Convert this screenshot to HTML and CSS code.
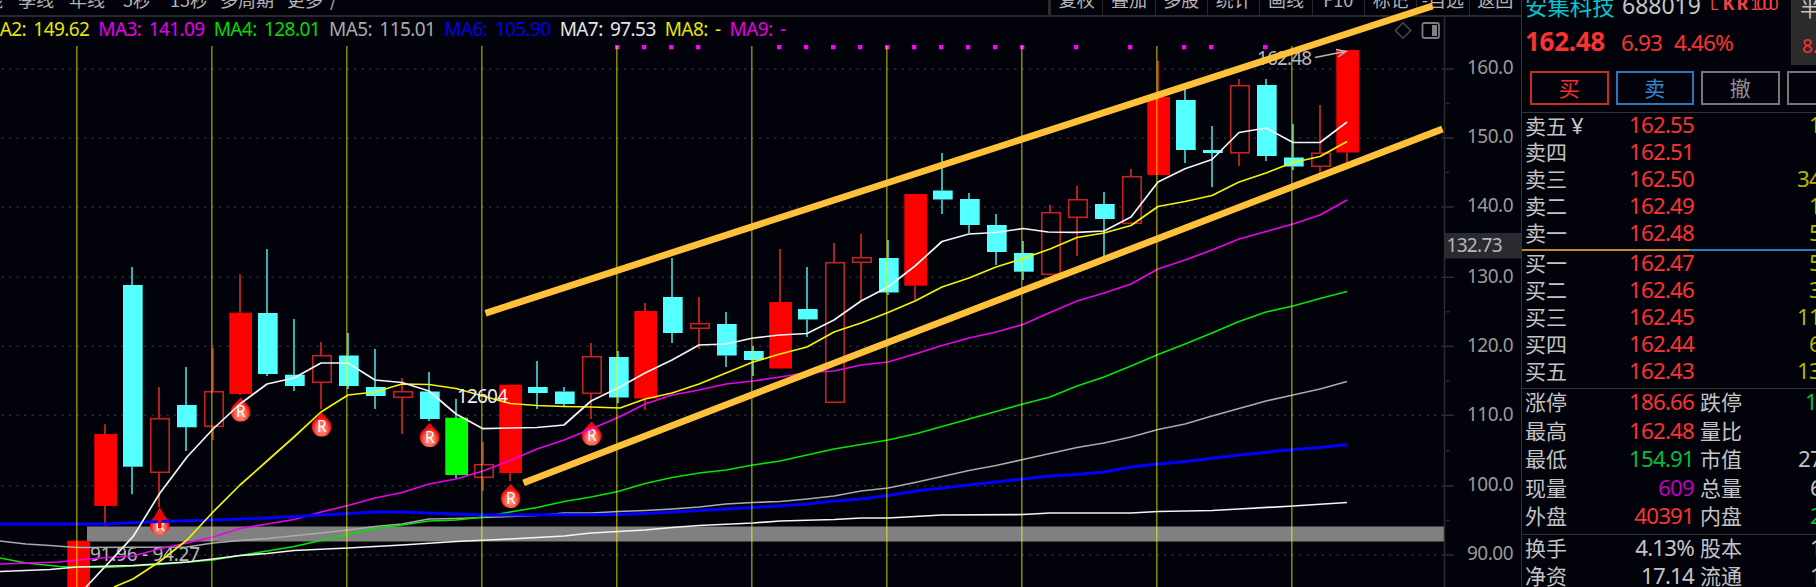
FILE: index.html
```html
<!DOCTYPE html>
<html lang="zh-CN">
<head>
    <meta charset="UTF-8">
    <meta name="viewport" content="width=device-width, initial-scale=1.0">
    <title>安集科技 688019</title>
    <link rel="stylesheet" href="styles.css">
</head>
<body>
    <div class="terminal">
        <main class="main">
            <nav class="toolbar">
                <div class="periods">
                    <span class="cut">月线</span>
                    <span>季线</span>
                    <span>年线</span>
                    <span class="sec">5秒</span>
                    <span class="sec wide">15秒</span>
                    <span class="multi">多周期</span>
                    <span class="more">更多</span>
                    <span class="slash">/</span>
                </div>
                <div class="tools">
                    <span>复权</span>
                    <span>叠加</span>
                    <span>多股</span>
                    <span>统计</span>
                    <span>画线</span>
                    <span>F10</span>
                    <span>标记</span>
                    <span>-自选</span>
                    <span>返回</span>
                </div>
            </nav>
            <div class="legend">
                <span class="yellow">MA2: 149.62</span>
                <span class="magenta">MA3: 141.09</span>
                <span class="green">MA4: 128.01</span>
                <span class="gray">MA5: 115.01</span>
                <span class="blue">MA6: 105.90</span>
                <span class="white">MA7: 97.53</span>
                <span class="yellow">MA8: -</span>
                <span class="magenta">MA9: -</span>
            </div>
            <svg class="chart" viewBox="0 42 1521 545" width="1521" height="545">
                <defs>
                    <radialGradient id="drop" cx="0.5" cy="0.7" r="0.5">
                        <stop offset="0" stop-color="#ffa090"/>
                        <stop offset="0.6" stop-color="#f8604c"/>
                        <stop offset="1" stop-color="#ee0808"/>
                    </radialGradient>
                </defs>
                <g id="grid"></g>
                <rect class="band" x="87" y="526.5" width="1357" height="15"/>
                <g id="candles"></g>
                <g id="marks"></g>
                <text class="note" x="90" y="561" textLength="110">91.96 - 94.27</text>
                <g id="averages"></g>
                <g id="sessions"></g>
                <path class="cue" d="M159.7 507L167 520H161.5V528H158V520H152.5Z"/>
                <text class="note light" x="457" y="402.5" textLength="51">12604</text>
                <text class="note" x="1257" y="65" textLength="55">162.48</text>
                <path class="pointer" d="M1315 57.5L1345 51.5M1336 49.5L1346 51.3L1338 57"/>
                <path class="icon" d="M1403 22.7L1410.7 30.5L1403 38.3L1395.3 30.5Z"/>
                <rect class="icon panel-icon" x="1422.5" y="23" width="16.5" height="15" rx="2"/>
                <rect class="icon-fill" x="1432" y="25" width="5" height="11"/>
                <line class="axis" x1="1444.5" y1="17" x2="1444.5" y2="587"/>
                <g id="scale"></g>
                <rect class="current" x="1445" y="233" width="76" height="25.5"/>
                <text class="note" x="1446.5" y="251.5" textLength="56">132.73</text>
                <line class="channel" x1="485.5" y1="313.2" x2="1432.5" y2="6"/>
                <line class="channel" x1="523.5" y1="482.8" x2="1442.5" y2="129"/>
            </svg>
        </main>

        <aside class="quote">
            <header class="stock">
                <div class="info">
                    <div class="title">
                        <span class="name">安集科技</span>
                        <span class="code">688019</span>
                        <span class="tags">L <b>K</b><b>R</b><i>1000</i></span>
                    </div>
                    <div class="price">
                        <strong>162.48</strong>
                        <span>6.93</span>
                        <span>4.46%</span>
                    </div>
                </div>
                <div class="sector">
                    <span>半</span>
                    <span class="red">8.</span>
                </div>
            </header>
            <div class="actions">
                <span class="buy">买</span>
                <span class="sell">卖</span>
                <span>撤</span>
                <span></span>
            </div>
            <section class="book asks">
                <div class="row"><span>卖五<small>¥</small></span><span class="num red">162.55</span><span class="vol one">1</span></div>
                <div class="row"><span>卖四</span><span class="num red">162.51</span><span></span></div>
                <div class="row"><span>卖三</span><span class="num red">162.50</span><span class="vol">34</span></div>
                <div class="row"><span>卖二</span><span class="num red">162.49</span><span class="vol one">1</span></div>
                <div class="row"><span>卖一</span><span class="num red">162.48</span><span class="vol one">5</span></div>
            </section>
            <div class="ratio"></div>
            <section class="book bids">
                <div class="row"><span>买一</span><span class="num red">162.47</span><span class="vol one">5</span></div>
                <div class="row"><span>买二</span><span class="num red">162.46</span><span class="vol one">3</span></div>
                <div class="row"><span>买三</span><span class="num red">162.45</span><span class="vol">11</span></div>
                <div class="row"><span>买四</span><span class="num red">162.44</span><span class="vol one">6</span></div>
                <div class="row"><span>买五</span><span class="num red">162.43</span><span class="vol">13</span></div>
            </section>
            <section class="stats">
                <div class="row"><span>涨停</span><span class="num red">186.66</span><span>跌停</span><span class="val down mid">1</span></div>
                <div class="row"><span>最高</span><span class="num red">162.48</span><span>量比</span><span></span></div>
                <div class="row"><span>最低</span><span class="num down">154.91</span><span>市值</span><span class="val">27</span></div>
                <div class="row"><span>现量</span><span class="num purple">609</span><span>总量</span><span class="val one">6</span></div>
                <div class="row"><span>外盘</span><span class="num red">40391</span><span>内盘</span><span class="val down one">2</span></div>
            </section>
            <section class="stats extra">
                <div class="row"><span>换手</span><span class="num">4.13%</span><span>股本</span><span class="val one">1</span></div>
                <div class="row"><span>净资</span><span class="num">17.14</span><span>流通</span><span class="val one">1</span></div>
            </section>
        </aside>
    </div>
    <script src="chart.js"></script>
</body>
</html>
```
FILE: styles.css
```css
* {
    box-sizing: border-box;
}

body {
    margin: 0;
    background: #02020a;
    color: #c4c4c4;
    font-family: "Noto Sans", "Noto Sans CJK SC", sans-serif;
    overflow: hidden;
}

.terminal {
    display: grid;
    grid-template-columns: 1521px 295px;
    height: 587px;
    overflow: hidden;
}

.main {
    display: flex;
    flex-direction: column;
    min-width: 0;
}

/* toolbar */
.toolbar {
    display: flex;
    justify-content: space-between;
    flex: none;
    height: 17px;
    overflow: hidden;
    border-bottom: 2px solid #29292d;
    font-family: "Noto Sans CJK SC", sans-serif;
    font-size: 18px;
    line-height: 26px;
    color: #b4b4b4;
}

.periods,
.tools {
    display: flex;
    height: 29px;
    margin-top: -14px;
    white-space: nowrap;
}

.periods {
    gap: 15px;
    margin-left: -33px;
}

.periods .sec {
    margin-left: 3px;
}

.periods .wide {
    margin-left: 4px;
}

.periods .multi {
    margin-left: -3px;
}

.periods .more {
    margin-left: -2px;
}

.periods .slash {
    margin-left: -8px;
}

.tools {
    width: 473px;
    border-left: 3px solid #2c2c30;
}

.tools span {
    flex: 1;
    text-align: center;
    border-right: 1px solid #29292d;
}

.tools span:last-child {
    border-right: 0;
}

/* moving average values */
.legend {
    display: flex;
    gap: 9px;
    flex: none;
    height: 25px;
    margin-left: -17px;
    font-size: 19px;
    line-height: 24px;
    letter-spacing: -0.58px;
    word-spacing: 3px;
    white-space: nowrap;
}

.legend .yellow { color: #e6e600; }
.legend .magenta { color: #e600e6; }
.legend .green { color: #00dc00; }
.legend .gray { color: #aaa; }
.legend .blue { color: #0000e6; }
.legend .white { color: #e6e6e6; }

/* chart */
.chart {
    display: block;
    flex: none;
    overflow: visible;
}

.grid-line {
    stroke: #2b2b31;
    stroke-width: 1.6;
    stroke-dasharray: 2.4 5.1;
}

.session {
    stroke: #ffff00;
    stroke-opacity: 0.5;
    stroke-width: 1.6;
}

.dot {
    fill: #ff00ff;
}

.band {
    fill: #808080;
}

.fill { fill: #ff0000; }
.down-bar { fill: #54ffff; }
.green-bar { fill: #00ff00; }

.hollow {
    fill: #02020a;
    stroke: #c42222;
    stroke-width: 1.6;
}

.wick {
    stroke: #3dbaba;
    stroke-width: 1.9;
}

.wick.up {
    stroke: #b82222;
}

.avg {
    fill: none;
    stroke-width: 1.7;
    stroke-linejoin: round;
}

.ma1, .ma7 { stroke: #f4f4f4; }
.ma2 { stroke: #f4f400; }
.ma3 { stroke: #ec00ec; }
.ma4 { stroke: #00e600; }
.ma5 { stroke: #aaaaaa; }
.ma6 { stroke: #0000ff; stroke-width: 3; }

.drop {
    fill: url(#drop);
}

.drop-letter {
    fill: #fff;
    font-size: 15.5px;
    font-weight: 400;
    text-anchor: middle;
}

.cue {
    fill: #f00000;
}

.note {
    fill: #b8b8b8;
    font-size: 19px;
}

.note.light {
    fill: #f0f0f0;
}

.pointer {
    fill: none;
    stroke: #b8b8b8;
    stroke-width: 1.5;
}

.icon {
    fill: none;
    stroke: #48484c;
    stroke-width: 1.5;
}

.panel-icon {
    stroke: #7c7c80;
    stroke-width: 1.8;
}

.icon-fill {
    fill: #808084;
}

.axis,
.tick {
    stroke: #2c2c30;
    stroke-width: 1.5;
}

.scale-label {
    fill: #9a9a9a;
    font-size: 19px;
}

.current {
    fill: #292b31;
}

.channel {
    stroke: #ffc03a;
    stroke-width: 6.8;
}

/* quote panel */
.quote {
    display: flex;
    flex-direction: column;
    border-left: 1px solid #333336;
    overflow: hidden;
    white-space: nowrap;
}

.stock {
    display: flex;
    justify-content: space-between;
    flex: none;
    height: 71px;
}

.info {
    padding-left: 3px;
}

.title {
    display: flex;
    height: 23px;
    margin-top: -9px;
    line-height: 31px;
}

.name {
    width: 97px;
    color: #00c8d2;
    font-size: 22.4px;
}

.code {
    width: 88px;
    font-size: 23px;
    line-height: 29px;
}

.tags {
    color: #f04444;
    font-size: 16px;
    line-height: 25px;
}

.tags b {
    margin-right: 2px;
    font-size: 18px;
}

.tags i {
    font-style: normal;
    font-family: "Liberation Sans", sans-serif;
    font-size: 17px;
    letter-spacing: -3.2px;
}

.price {
    display: flex;
    align-items: baseline;
    height: 40px;
    margin-top: 8px;
    color: #fa3232;
    font-size: 22.5px;
    line-height: 38px;
    letter-spacing: -0.9px;
}

.price strong {
    width: 96px;
    font-size: 26px;
    letter-spacing: -0.3px;
}

.price span {
    width: 53px;
}

.sector {
    display: flex;
    flex-direction: column;
    width: 25px;
    height: 65px;
    padding-left: 9px;
    overflow: hidden;
    background: #2b2b2b;
    font-size: 20px;
    line-height: 36px;
}

.sector span:first-child {
    margin-top: -8px;
}

.sector .red {
    padding-left: 2px;
    font-size: 19px;
}

.actions {
    display: flex;
    gap: 7px;
    flex: none;
    height: 41px;
    padding-left: 8px;
}

.actions span {
    flex: none;
    width: 78.5px;
    height: 34px;
    border: 2px solid #77777a;
    color: #909094;
    font-size: 21px;
    line-height: 30px;
    text-align: center;
}

.actions .buy {
    border-color: #cc2a2a;
    color: #f03030;
}

.actions .sell {
    border-color: #2d74b8;
    color: #3286d2;
}

.row {
    display: grid;
    font-size: 21px;
}

.book .row {
    grid-template-columns: 60px 109px 1fr;
    height: 27px;
    padding-left: 3px;
    line-height: 24px;
}

.book small {
    margin-left: 4px;
    font-size: 22px;
}

.asks {
    border-top: 1px solid #333336;
}

.ratio {
    flex: none;
    height: 2px;
    margin-top: 1px;
    background: linear-gradient(to right, #c48a20 167px, #2d7ac4 167px);
}

.num,
.vol,
.val {
    font-size: 22.3px;
    letter-spacing: -0.8px;
}

.num {
    text-align: right;
}

.vol {
    padding-left: 103px;
    color: #b4b400;
}

.vol.one {
    padding-left: 115px;
}

.stats {
    flex: none;
    margin-top: 2px;
    border-top: 1px solid #333336;
}

.stats .row {
    grid-template-columns: 60px 109px 104px 1fr;
    height: 28.5px;
    padding-left: 3px;
    line-height: 26px;
}

.stats .num + span {
    padding-left: 6px;
}

.val.one {
    padding-left: 12px;
}

.val.mid {
    padding-left: 7px;
}

.red { color: #fa3232; }
.down { color: #00be3c; }
.purple { color: #be00be; }
```
FILE: chart.js
```js
const SVG = 'http://www.w3.org/2000/svg';
const FIRST = 78;
const STEP = 27;

function add(parent, tag, attrs, text) {
    const el = document.createElementNS(SVG, tag);
    for (const key in attrs) {
        el.setAttribute(key, attrs[key]);
    }
    if (text) {
        el.textContent = text;
    }
    document.getElementById(parent).appendChild(el);
}

// [type, high, body top, body bottom, low]
// F = limit up, H = up, C = down, G = marked down bar
const candles = [
    ['F', 540.7, 540.7, 590, 590], ['F', 424.3, 434, 506, 525.7], ['C', 267, 285, 466.7, 494.3],
    ['H', 387, 418, 473, 507], ['C', 367, 405, 427.3, 451], ['H', 348, 391, 427, 440],
    ['F', 274.3, 312.7, 394, 395], ['C', 249, 313, 374, 376], ['C', 319, 374.7, 386, 391],
    ['H', 342, 355, 383, 409], ['C', 333, 355.5, 386, 389], ['C', 349, 387, 396, 409],
    ['H', 378, 391, 398, 434], ['C', 372, 391.5, 419, 421], ['G', 398.7, 417.7, 475, 478],
    ['H', 442, 464, 478, 491], ['F', 384.7, 384.7, 473, 481], ['C', 361, 387, 393, 409],
    ['C', 387, 391.5, 404, 406], ['H', 343, 356, 394, 419], ['C', 351, 357, 397.5, 403],
    ['F', 303, 311, 398.5, 410], ['C', 258, 297, 333, 343], ['H', 297, 323, 329, 349],
    ['C', 312, 324, 355.5, 367], ['C', 346, 351, 360, 376], ['F', 249, 302, 368.5, 368.5],
    ['C', 267, 309, 319.5, 337], ['H', 243, 262, 403, 403], ['H', 234, 257, 263, 300.5],
    ['C', 240, 258, 292.5, 295], ['F', 194, 194, 285.7, 300], ['C', 153, 190.5, 199.5, 214],
    ['C', 193, 199, 225, 233], ['C', 214, 225, 252, 265], ['C', 241, 253, 271.7, 280],
    ['H', 205, 212, 275, 275], ['H', 186, 199, 218, 256], ['C', 192, 204, 219, 256],
    ['H', 169, 176, 224, 224], ['F', 61, 97, 175, 175], ['C', 88, 100, 150, 163],
    ['C', 126, 150, 153, 187], ['H', 79, 85, 153.5, 166], ['C', 79, 85, 156, 161],
    ['C', 124, 157.5, 166.5, 170], ['H', 105, 152.5, 167, 174], ['F', 50, 50, 152.5, 164]
];

const averages = {
    ma5: '0,541 26,544 50,545.5 77,547.5 187,547 213,543 240,540.5 267,538.5 321,533 348,530 375,526.5 402,524 429,519 456,518.5 483,517.5 510,516.5 537,515.5 564,513 591,513 618,511.5 645,510.5 672,509 699,507 726,504 753,502.5 780,501.5 807,499 834,496 861,491 888,488 915,482.5 942,476.5 969,470.5 996,465.5 1023,459.5 1050,453.5 1077,447.5 1104,443 1131,437 1158,429.5 1185,424 1212,416 1239,408.5 1266,401 1293,395 1320,389 1347,381.5',
    ma4: '0,558 26,563 60,566.5 105,567.5 159,564.5 213,560 240,555.5 267,551 294,546.5 321,540.5 348,534.5 375,528.5 402,525 429,521 456,520 483,517 510,512 537,507.5 564,501.5 591,497 618,491.5 645,483.5 672,477.5 699,473 726,470 753,465 780,461 807,455 834,449 861,444.5 888,440 915,434 942,426.5 969,419 996,411.5 1023,404 1050,397 1077,386 1104,377 1131,366 1158,354.5 1185,344 1212,333 1239,321.5 1266,312 1293,306 1320,298.5 1347,291.5',
    ma7: '0,571.5 50,569.5 77,567 133,565.5 187,562 213,559 240,555.5 267,553.5 294,550.5 348,548 402,545 456,541.5 510,539 564,536 591,533 645,530 672,527.5 699,525.5 753,523 780,521 834,519.5 861,518 888,518 942,515 1023,514.5 1050,513 1131,513 1158,511.5 1212,510.5 1239,509 1293,506 1347,502.5',
    ma3: '0,564 58,562 100,558 133,556 159,549 187,543 213,537 240,528.5 267,524 294,519.5 321,512 348,505.5 375,498 402,492.5 429,484 456,479 483,471 510,460.5 537,449 564,440 591,429 618,417.5 645,404 672,395 699,390 726,384 753,381 780,377 807,372.5 834,371 861,365 888,362 915,354 942,345.5 969,338 996,332 1023,324.5 1050,312.5 1077,301 1104,293 1131,284 1158,269 1185,260 1212,250 1239,239 1266,231.5 1293,224 1320,215 1347,200',
    ma6: '0,524 105,524 159,521.5 213,520 267,518 321,515 375,512 402,512 456,514 483,515 618,514.5 645,513.5 672,512 699,510.5 726,509 753,507.5 807,504 834,501 861,499 888,495.5 915,491 942,488 1023,479 1050,476 1077,474.5 1104,472 1131,467 1158,464 1185,461.5 1239,455 1293,449.5 1320,447.5 1347,444.5',
    ma2: '114,587 133,579 159,562 187,540 213,512 240,485 267,461 294,437 321,412 348,395 375,392 402,384 429,384.5 456,388.5 483,396 510,403.5 537,405.5 564,406.5 591,407 620,408 645,399 672,393 699,384 726,373 753,362 780,354 807,347 834,332 861,323 888,312.5 915,301 942,287 969,278 996,267 1023,258.5 1050,249 1077,237.5 1104,233 1131,225.5 1158,206.5 1185,201.5 1212,195.5 1239,182 1266,173 1293,162.5 1320,156.5 1347,141.5',
    ma1: '86,587 133,536.7 160,493 187,457 213,429 240,404 267,384 294,378 321,363 348,363 375,380 402,382.5 429,391 456,414 483,428.7 510,428 537,427.5 564,425 591,401 618,388 645,373 672,360 699,345 726,344 753,338 780,335 807,333.5 834,320 861,301 888,287 915,266 942,241.5 969,234 996,232.5 1023,228.5 1048,232 1077,232.3 1104,231 1131,217 1158,182 1185,168.7 1212,159.5 1239,132.5 1266,128 1293,142.5 1320,142.5 1347,122'
};

const scale = [
    [69, '160.0'], [138, '150.0'], [207, '140.0'], [277.3, '130.0'],
    [346.3, '120.0'], [415.3, '110.0'], [486, '100.0'], [555, '90.00']
];

scale.forEach(([y, label], i) => {
    add('grid', 'line', { class: 'grid-line', x1: 1.5, y1: y, x2: 1444, y2: y });
    add('scale', 'line', { class: 'tick', x1: 1445, y1: y, x2: 1454, y2: y });
    if (i < scale.length - 1) {
        const mid = (y + scale[i + 1][0]) / 2;
        add('scale', 'line', { class: 'tick', x1: 1446, y1: mid, x2: 1449.5, y2: mid });
    }
    add('scale', 'text', { class: 'scale-label', x: 1467, y: y + 5.3, textLength: 46.5 }, label);
});

candles.forEach(([type, high, top, bottom, low], i) => {
    const x = FIRST + STEP * i;
    const up = type === 'F' || type === 'H';
    const wick = up ? 'wick up' : 'wick';
    if (high < top) {
        add('candles', 'line', { class: wick, x1: x, y1: high, x2: x, y2: top });
    }
    if (low > bottom) {
        add('candles', 'line', { class: wick, x1: x, y1: bottom, x2: x, y2: low });
    }
    if (type === 'H') {
        add('candles', 'rect', { class: 'hollow', x: x - 8.2, y: top + 0.7, width: 18.4, height: bottom - top - 1.4 });
    } else if (type === 'C') {
        add('candles', 'rect', { class: 'down-bar', x: x - 9, y: top, width: 19.7, height: bottom - top });
    } else {
        add('candles', 'rect', { class: type === 'F' ? 'fill' : 'green-bar', x: x - 10.7, y: top, width: 22.7, height: bottom - top });
    }
});

for (const name in averages) {
    add('averages', 'polyline', { class: 'avg ' + name, points: averages[name] });
}

for (let i = 0; i < 10; i++) {
    const x = 76.8 + 135 * i;
    add('sessions', 'line', { class: 'session', x1: x, y1: 46, x2: x, y2: 587 });
}

[20, 21, 22, 23, 26, 27, 28, 29, 30, 31, 32, 33, 34, 35, 37, 39, 41, 42, 44].forEach(i => {
    add('grid', 'rect', { class: 'dot', x: FIRST + STEP * i - 3, y: 45, width: 4.3, height: 4.3 });
});

// R badges under the bars
[[159.7, 525], [240.6, 411.5], [321.6, 426.5], [429.6, 437], [510.6, 498], [591.6, 435.5]].forEach(([x, y]) => {
    add('marks', 'path', {
        class: 'drop',
        d: `M${x} ${y - 14}L${x + 6} ${y - 7.5}A9.8 9.8 0 1 1 ${x - 6} ${y - 7.5}Z`
    });
    add('marks', 'text', { class: 'drop-letter', x: x + 0.3, y: y + 5.5 }, 'R');
});
```
